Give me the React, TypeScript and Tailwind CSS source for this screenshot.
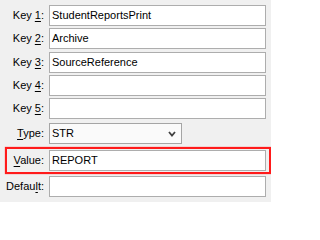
import React from 'react';

const font = { fontFamily: '"Liberation Sans", Arial, sans-serif' };

function Label({ pre, key: _k, hot, post, width = 'w-[44px]' }: { pre: string; key?: string; hot: string; post: string; width?: string }) {
    return (
        <div className={`${width} shrink-0 text-right text-[11px] leading-none text-black`}>
            {pre}
            <span className="underline underline-offset-[2px]">{hot}</span>
            {post}
        </div>
    );
}

function Field({ value }: { value?: string }) {
    return (
        <div className="flex-1 h-[21px] bg-white border border-[#adadad] flex items-center pl-[2px] text-[11px] text-black">
            {value}
        </div>
    );
}

function Row({ pre, hot, post, value, className }: { pre: string; hot: string; post: string; value?: string; className: string }) {
    return (
        <div className={`flex items-center gap-[5px] ${className}`}>
            <Label pre={pre} hot={hot} post={post} />
            <Field value={value} />
        </div>
    );
}

export default function App() {
    return (
        <div className="w-[271px] h-[202px] bg-[#f0f0f0] pt-[5px] pr-[5px] flex flex-col overflow-hidden" style={font}>
            <Row pre="Key " hot="1" post=":" value="StudentReportsPrint" className="" />
            <Row pre="Key " hot="2" post=":" value="Archive" className="mt-[2px]" />
            <Row pre="Key " hot="3" post=":" value="SourceReference" className="mt-[3px]" />
            <Row pre="Key " hot="4" post=":" className="mt-[2px]" />
            <Row pre="Key " hot="5" post=":" className="mt-[2px]" />

            {/* Type dropdown */}
            <div className="flex items-center gap-[5px] mt-[4px]">
                <Label pre="" hot="T" post="ype:" />
                <div className="w-[133px] h-[21px] bg-[#fafafa] border border-[#a5a5a5] flex items-center justify-between pl-[2px] pr-[5px] text-[11px] text-black">
                    <span>STR</span>
                    <svg width="8" height="6" viewBox="0 0 8 6">
                        <polyline points="1,1 4,4.5 7,1" fill="none" stroke="#404040" strokeWidth="1.8" />
                    </svg>
                </div>
            </div>

            {/* Highlighted value row */}
            <div className="mt-[3px] ml-[5px] -mr-[5px] border-2 border-[#ff1a1a] shadow-[0_0_1px_#ff5050] py-[1px] pr-[3px] flex items-center gap-[5px]">
                <Label pre="" hot="V" post="alue:" width="w-[37px]" />
                <Field value="REPORT" />
            </div>

            <Row pre="Defau" hot="l" post="t:" className="mt-[2px]" />
        </div>
    );
}
